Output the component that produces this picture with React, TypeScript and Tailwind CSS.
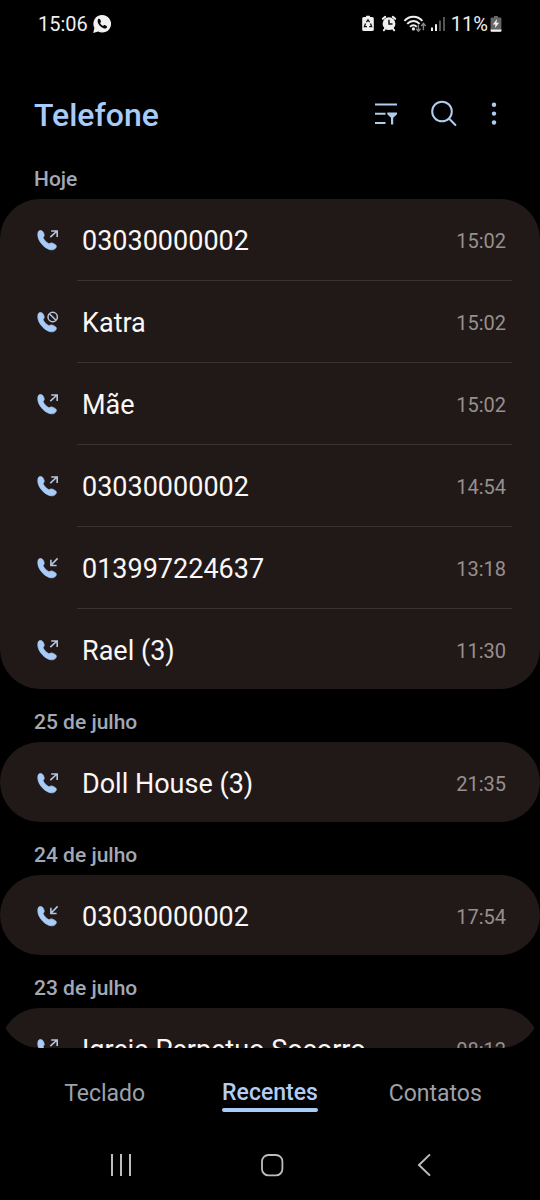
import React from 'react';

type CallKind = 'outgoing' | 'incoming' | 'blocked';

interface Call {
  name: string;
  time: string;
  kind: CallKind;
}

interface Day {
  label: string;
  calls: Call[];
}

const days: Day[] = [
  {
    label: 'Hoje',
    calls: [
      { name: '03030000002', time: '15:02', kind: 'outgoing' },
      { name: 'Katra', time: '15:02', kind: 'blocked' },
      { name: 'Mãe', time: '15:02', kind: 'outgoing' },
      { name: '03030000002', time: '14:54', kind: 'outgoing' },
      { name: '013997224637', time: '13:18', kind: 'incoming' },
      { name: 'Rael (3)', time: '11:30', kind: 'outgoing' },
    ],
  },
  { label: '25 de julho', calls: [{ name: 'Doll House (3)', time: '21:35', kind: 'outgoing' }] },
  { label: '24 de julho', calls: [{ name: '03030000002', time: '17:54', kind: 'incoming' }] },
  { label: '23 de julho', calls: [{ name: 'Igreja Perpetuo Socorro', time: '08:12', kind: 'outgoing' }] },
];

const kindLabels: Record<CallKind, string> = {
  outgoing: 'Chamada efetuada',
  incoming: 'Chamada recebida',
  blocked: 'Chamada bloqueada',
};

const CallIcon = ({ kind }: { kind: CallKind }) => (
  <svg width="24" height="24" viewBox="0 0 24 24" fill="none" role="img" aria-label={kindLabels[kind]} className="shrink-0 text-[#a9cbf7]">
    <path
      fill="currentColor"
      stroke="currentColor"
      strokeWidth="0.7"
      d="M3.2 2.8C4.6 2 6.4 2.6 7.2 4.2C7.9 5.5 8.6 7.2 8 8.2C7.3 9.1 6.9 9.4 7.5 10.6C8.7 12.7 10.3 14.3 12.4 15.4C13.4 15.9 13.9 15.3 14.7 15C15.9 14.5 18.6 15.9 19.8 17C21 18.3 20 20.1 18.6 21.1C16 22.9 11 21.3 7 17.4C3.4 13.9 1.6 9.6 1.8 6.4C1.9 4.6 2.2 3.4 3.2 2.8Z"
    />
    {kind === 'outgoing' && <path stroke="#b4c6de" strokeWidth="1.6" d="M14.3 9.2L21 3M15.2 3H21.2V9" />}
    {kind === 'incoming' && <path stroke="#b4c6de" strokeWidth="1.6" d="M21.6 2.4L14.9 9.3M14.9 3.8V9.5H20.6" />}
    {kind === 'blocked' && (
      <>
        <circle cx="16.7" cy="7" r="6.3" fill="#211918" />
        <circle cx="16.7" cy="7" r="4.7" stroke="#b4c6de" strokeWidth="1.5" />
        <path stroke="#b4c6de" strokeWidth="1.5" d="M13.4 3.7L20 10.3" />
      </>
    )}
  </svg>
);

const StatusBar = () => (
  <div className="flex h-12 shrink-0 items-center justify-between pl-[38px] pr-9 text-xl text-[#efefef]">
    <div className="flex items-center gap-1">
      <span>15:06</span>
      <svg width="20" height="20" viewBox="0 0 20 20" aria-hidden="true">
        <path fill="#f2f2f2" d="M10.3 1A8.8 8.8 0 1 1 6.2 17.6L1.2 19L2.4 14A8.8 8.8 0 0 1 10.3 1Z" />
        <path
          fill="#050505"
          d="M6.1 5.2C6.8 4.6 7.8 4.8 8.2 5.6L8.9 7.2C9.2 8 8.3 8.5 8.2 8.9C8.5 10.1 9.9 11.5 11 11.8C11.5 11.8 12 10.8 12.8 11.1L14.5 12C15.2 12.4 15.1 13.4 14.5 14C11.4 16.5 3.6 9.2 6.1 5.2Z"
        />
      </svg>
    </div>
    <div className="flex items-center">
      <svg width="90" height="20" viewBox="0 0 90 20" fill="none" aria-hidden="true">
        {/* battery with recycle mark */}
        <path fill="#f0f0f0" d="M7 3V1.8H11V3H13.2Q14.8 3 14.8 4.6V15.4Q14.8 17 13.2 17H4.8Q3.2 17 3.2 15.4V4.6Q3.2 3 4.8 3Z" />
        <path stroke="#111" strokeWidth="1.3" d="M7.4 8.1L9 5.8L10.6 8.1M11.5 9.5L12.6 12.6H10.2M8 12.6H5.4L6.5 9.5" />
        {/* alarm */}
        <circle cx="30" cy="9.7" r="6.4" fill="#f0f0f0" />
        <path stroke="#f0f0f0" strokeWidth="2" strokeLinecap="round" d="M23.8 4.8L26.2 2.9M36.2 4.8L33.8 2.9M26.2 14.5L24.8 16.3M33.8 14.5L35.2 16.3" />
        <path stroke="#111" strokeWidth="1.5" d="M30 5.8V10H33.5" />
        {/* wifi */}
        <path stroke="#f0f0f0" strokeWidth="1.9" d="M45.4 6.8C50.4 1.3 58.4 1.3 63.4 6.8M48.2 9.9C51.8 6.1 57 6.1 60.6 9.9M51 12.8C53 10.8 55.8 10.8 57.8 12.8" />
        <circle cx="54.4" cy="14.9" r="1.6" fill="#f0f0f0" />
        <path stroke="#858585" strokeWidth="1.4" d="M59.4 10.5V17M57.2 14.8L59.4 17.2L61.6 14.8M64.4 16.2V9.6M62.2 12L64.4 9.4L66.6 12" />
        {/* signal */}
        <path stroke="#f0f0f0" strokeWidth="2" d="M73 13.6V17M77 10.2V17" />
        <path stroke="#555" strokeWidth="2" d="M81 6.6V17M85 3V17" />
      </svg>
      <span className="ml-0.5">11%</span>
      <svg width="16" height="20" viewBox="0 0 16 20" aria-hidden="true">
        <path fill="#666" d="M6 3.4V2H10V3.4H12.2Q13.4 3.4 13.4 4.6V17.4H2.6V4.6Q2.6 3.4 3.8 3.4Z" />
        <path fill="#f0f0f0" d="M2.6 15.5H13.4V16.5Q13.4 17.8 12.2 17.8H3.8Q2.6 17.8 2.6 16.5ZM9 5L4.8 10.4H7.4L7 14L11.2 8.7H8.5Z" />
      </svg>
    </div>
  </div>
);

const Header = () => (
  <header className="flex h-[98px] shrink-0 items-center justify-between pl-[34px] pr-[34px] pt-9">
    <h1 className="text-[32px] font-medium leading-10 text-[#a9cbf9]">Telefone</h1>
    <div className="flex items-center gap-6 text-[#b0cdf0]">
      <button type="button" aria-label="Filtrar">
        <svg width="32" height="32" viewBox="0 0 32 32" fill="none">
          <path stroke="currentColor" strokeWidth="2" d="M5 5.5H27M5 14.7H15.5M5 24H15.5" />
          <path fill="currentColor" d="M17.3 13.5H27V15.3L23.2 18.8V25.6H21V18.8L17.3 15.3Z" />
        </svg>
      </button>
      <button type="button" aria-label="Pesquisar">
        <svg width="32" height="32" viewBox="0 0 32 32" fill="none" stroke="currentColor" strokeWidth="2">
          <circle cx="16" cy="12.5" r="9.8" />
          <path strokeLinecap="round" d="M23.2 19.8L29.4 26" />
        </svg>
      </button>
      <button type="button" aria-label="Mais opções">
        <svg width="24" height="32" viewBox="0 0 24 32" fill="currentColor">
          <circle cx="12" cy="5.7" r="2.2" />
          <circle cx="12" cy="14.6" r="2.2" />
          <circle cx="12" cy="23.5" r="2.2" />
        </svg>
      </button>
    </div>
  </header>
);

const DaySection = ({ day }: { day: Day }) => (
  <section>
    <h2 className="h-[53px] px-[34px] pt-[19px] text-[21px] font-medium leading-7 text-[#a2a9b4]">{day.label}</h2>
    <ul className="overflow-hidden rounded-[40px] bg-[#211918]">
      {day.calls.map((call, i) => (
        <li key={i} className="group flex h-[82px] items-center gap-[17px] pl-9 pr-7 last:h-20 last:pt-0.5">
          <CallIcon kind={call.kind} />
          <div className="flex h-full flex-1 items-center justify-between border-b border-[#3b3332] pl-[5px] pr-1.5 pt-0.5 group-last:border-0">
            <span className="text-[27px] leading-8 text-[#faf7f6]">{call.name}</span>
            <span className="text-xl text-[#978f8e]">{call.time}</span>
          </div>
        </li>
      ))}
    </ul>
  </section>
);

const Tabs = () => (
  <nav className="grid h-[82px] grid-cols-3 px-[22px] pt-[30px] text-[23px] leading-8 text-[#9da1a9]">
    <a href="#teclado" className="justify-self-center">Teclado</a>
    <a href="#recentes" aria-current="page" className="justify-self-center font-medium leading-[30px] text-[#b3ccf6]">
      <span className="block">Recentes</span>
      <span className="block h-1 rounded-full bg-[#a9cbf7]" />
    </a>
    <a href="#contatos" className="justify-self-center">Contatos</a>
  </nav>
);

const NavigationBar = () => (
  <div className="grid h-[70px] grid-cols-3 items-center pl-11 pr-10 text-[#bdbdbd]">
    <button type="button" aria-label="Aplicativos recentes" className="justify-self-center">
      <svg width="24" height="24" viewBox="0 0 24 24" stroke="currentColor" strokeWidth="2">
        <path d="M4 1V23M13 1V23M22 1V23" />
      </svg>
    </button>
    <button type="button" aria-label="Início" className="justify-self-center">
      <svg width="24" height="24" viewBox="0 0 24 24" fill="none" stroke="currentColor" strokeWidth="1.8">
        <rect x="2" y="2" width="20.4" height="20.4" rx="6.5" />
      </svg>
    </button>
    <button type="button" aria-label="Voltar" className="justify-self-center">
      <svg width="24" height="24" viewBox="0 0 24 24" fill="none" stroke="currentColor" strokeWidth="2">
        <path d="M18 1.4L7 12L18 22.6" />
      </svg>
    </button>
  </div>
);

export default function App() {
  return (
    <div className="flex h-screen flex-col bg-black font-[Roboto,sans-serif]">
      <StatusBar />
      <Header />
      <main className="min-h-0 flex-1 overflow-y-auto rounded-b-[40px] [scrollbar-width:none]">
        {days.map((day) => (
          <DaySection key={day.label} day={day} />
        ))}
      </main>
      <footer className="shrink-0">
        <Tabs />
        <NavigationBar />
      </footer>
    </div>
  );
}
